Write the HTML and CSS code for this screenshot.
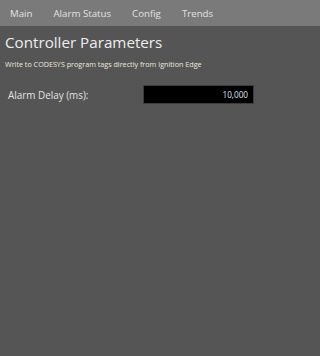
FILE: index.html
```html
<!DOCTYPE html>
<html>
<head>
<meta charset="utf-8">
<link rel="stylesheet" href="styles.css">
</head>
<body>
<nav class="tabs">
  <span class="tab">Main</span>
  <span class="tab">Alarm Status</span>
  <span class="tab">Config</span>
  <span class="tab">Trends</span>
</nav>
<main class="content">
  <h1 class="title">Controller Parameters</h1>
  <p class="subtitle">Write to CODESYS program tags directly from Ignition Edge</p>
  <div class="field">
    <label class="field-label">Alarm Delay (ms):</label>
    <div class="field-input">10,000</div>
  </div>
</main>
</body>
</html>
```
FILE: styles.css
```css
html, body {
  margin: 0;
  padding: 0;
  height: 100%;
}
body {
  background: #555555;
  font-family: "Open Sans", "Noto Sans", sans-serif;
  color: #e6e6e6;
}
.tabs {
  display: flex;
  gap: 21px;
  height: 26px;
  align-items: center;
  padding-left: 10px;
  background: #7a7a7a;
}
.tab {
  font-size: 9.7px;
  color: #e2e2e2;
  transform: translateY(-0.5px);
}
.content {
  padding: 6px 5px 0 5px;
}
.title {
  margin: 0;
  font-size: 15.2px;
  font-weight: normal;
  line-height: 20px;
  color: #eeeeee;
}
.subtitle {
  margin: 7px 0 0 0;
  font-size: 7.2px;
  line-height: 10px;
  color: #efe8dc;
}
.field {
  display: flex;
  align-items: center;
  margin-top: 16px;
  padding-left: 3px;
}
.field-label {
  width: 135px;
  font-size: 9.9px;
  color: #e2e2e2;
}
.field-input {
  box-sizing: border-box;
  width: 111px;
  height: 19px;
  background: #000;
  border: 1px solid #3c3c3c;
  color: #dceaf7;
  font-size: 8.2px;
  text-align: right;
  padding-right: 5px;
  line-height: 17px;
}
```
